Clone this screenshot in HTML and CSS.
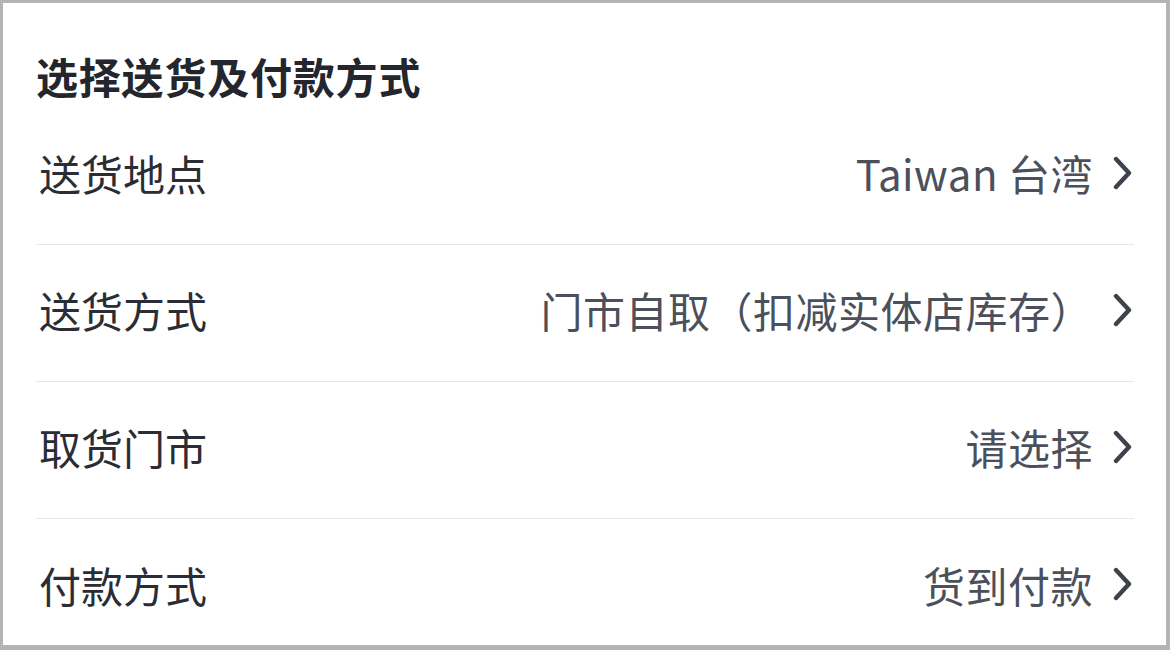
FILE: index.html
```html
<!DOCTYPE html>
<html lang="zh-CN">

<head>
  <meta charset="UTF-8">
  <title>选择送货及付款方式</title>
  <link rel="stylesheet" href="styles.css">
</head>

<body>
  <div class="sheet">
    <h1 class="sheet__title">选择送货及付款方式</h1>

    <div class="option">
      <span class="option__label">送货地点</span>
      <span class="option__value">Taiwan 台湾</span>
      <svg class="option__arrow" viewBox="0 0 20 34"><path d="M 3 3 L 16 17 L 3 31"></path></svg>
    </div>

    <div class="option">
      <span class="option__label">送货方式</span>
      <span class="option__value">门市自取（扣减实体店库存）</span>
      <svg class="option__arrow" viewBox="0 0 20 34"><path d="M 3 3 L 16 17 L 3 31"></path></svg>
    </div>

    <div class="option">
      <span class="option__label">取货门市</span>
      <span class="option__value">请选择</span>
      <svg class="option__arrow" viewBox="0 0 20 34"><path d="M 3 3 L 16 17 L 3 31"></path></svg>
    </div>

    <div class="option">
      <span class="option__label">付款方式</span>
      <span class="option__value">货到付款</span>
      <svg class="option__arrow" viewBox="0 0 20 34"><path d="M 3 3 L 16 17 L 3 31"></path></svg>
    </div>
  </div>
</body>

</html>
```

FILE: styles.css
```css
* {
  box-sizing: border-box;
}

body {
  margin: 0;
  background-color: #fff;
  font-family: "Noto Sans CJK SC", "Noto Sans", sans-serif;
}

.sheet {
  width: 1170px;
  height: 650px;
  overflow: hidden;
  border-style: solid;
  border-color: #b4b4b4;
  border-width: 3px 4px 5px 3px;
  padding: 0 32px 0 33px;
  background-color: #fff;
}

.sheet__title {
  margin: 0;
  padding: 48px 0 7px;
  font-size: 42px;
  line-height: 50px;
  font-weight: 700;
  letter-spacing: 0.8px;
  color: #23262c;
}

.option {
  display: flex;
  align-items: center;
  height: 137px;
  padding-bottom: 7px;
  border-bottom: 1px solid #e6e6e8;
}

.option:last-child {
  border-bottom: none;
}

.option__label {
  flex: 1;
  font-size: 42px;
  color: #2a2d33;
  padding-left: 3px;
}

.option__value {
  font-size: 42px;
  color: #4b505b;
  letter-spacing: 0.5px;
}

.option__arrow {
  width: 20px;
  height: 34px;
  margin-left: 20px;
  margin-right: 1px;
}

.option__arrow path {
  fill: none;
  stroke: #3d424c;
  stroke-width: 4.4;
  stroke-linecap: round;
  stroke-linejoin: round;
}
```
